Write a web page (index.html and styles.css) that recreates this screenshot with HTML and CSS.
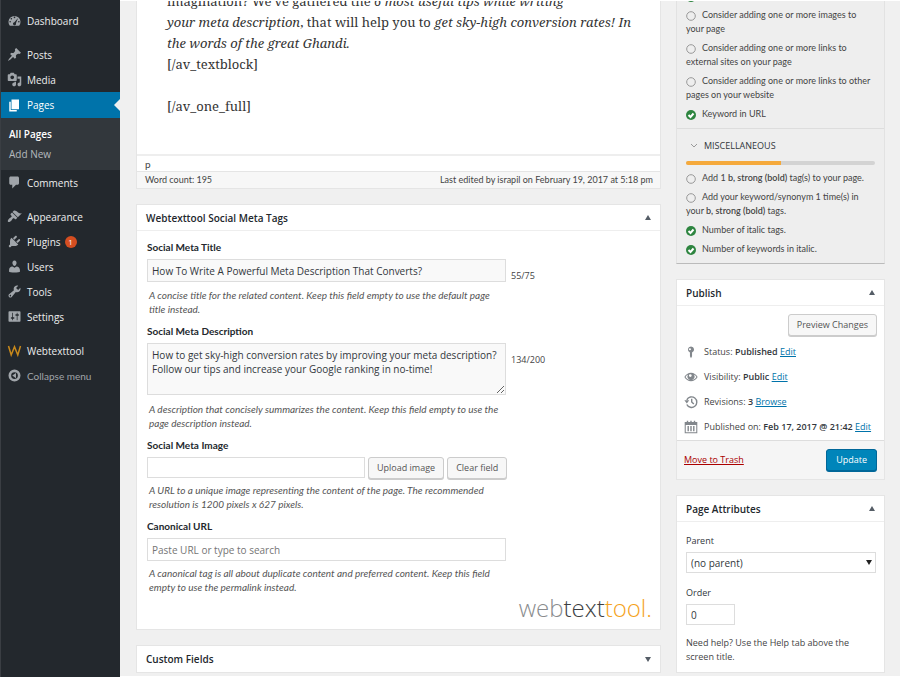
FILE: index.html
```html
<!DOCTYPE html>
<html lang="en">
<head>
<meta charset="utf-8">
<title>Edit Page</title>
<link rel="stylesheet" href="styles.css">
</head>
<body>
<nav class="menu" aria-label="Main menu">
  <a class="item" href="#"><svg class="icon" viewBox="0 0 20 20"><path fill-rule="evenodd" d="M3.8 17h12.4A8 8 0 1 0 3.800 17zM10 4.800a1.100 1.100 0 1 1 0 2.200 1.100 1.100 0 0 1 0-2.200zM5.800 6.500a1.100 1.100 0 1 1 0 2.200 1.100 1.100 0 0 1 0-2.200zM4.200 10.500a1.100 1.100 0 1 1 0 2.200 1.100 1.100 0 0 1 0-2.200zM15.800 10.500a1.100 1.100 0 1 1 0 2.200 1.100 1.100 0 0 1 0-2.200zM14.800 6.600l-2.900 7a2 2 0 1 1-2.100-1.300z"/></svg>Dashboard</a>
  <hr class="separator">
  <a class="item" href="#"><svg class="icon" viewBox="0 0 20 20"><path d="M10.440 3.020l1.820-1.820 6.360 6.350-1.830 1.820c-1.050-.68-2.480-.57-3.410.36l-.75.75c-.92.93-1.040 2.350-.35 3.410l-1.830 1.820-2.410-2.410-2.800 2.790c-.42.42-3.380 2.710-3.800 2.290s1.860-3.390 2.280-3.810l2.790-2.790L4.100 9.360l1.830-1.820c1.050.69 2.480.57 3.400-.36l.75-.75c.93-.92 1.050-2.350.36-3.410z"/></svg>Posts</a>
  <a class="item" href="#"><svg class="icon" viewBox="0 0 20 20"><path fill-rule="evenodd" d="M13 11V4c0-.55-.45-1-1-1h-1.670L9 1H5L3.670 3H2c-.55 0-1 .45-1 1v7c0 .55.45 1 1 1h10c.55 0 1-.45 1-1zM7 4.500c1.380 0 2.500 1.120 2.500 2.500S8.380 9.500 7 9.500 4.500 8.380 4.500 7 5.620 4.500 7 4.500zM14 6h5v10.500c0 1.380-1.120 2.500-2.500 2.500S14 17.880 14 16.500s1.120-2.500 2.500-2.500c.17 0 .34.02.5.05V9h-3V6zm-4 8.050V13h2v3.500c0 1.380-1.120 2.500-2.500 2.500S7 17.880 7 16.500 8.120 14 9.500 14c.17 0 .34.02.5.05z"/></svg>Media</a>
  <a class="item current" href="#"><svg class="icon" viewBox="0 0 20 20"><path d="M6 15V2h10v13H6zm-1 1h8v2H3V5h2v11z"/></svg>Pages</a>
  <div class="submenu">
    <a class="sub active" href="#">All Pages</a>
    <a class="sub" href="#">Add New</a>
  </div>
  <a class="item" href="#"><svg class="icon" viewBox="0 0 20 20"><path d="M5 2h9c1.100 0 2 .9 2 2v7c0 1.100-.9 2-2 2h-2l-5 5v-5H5c-1.100 0-2-.9-2-2V4c0-1.100.9-2 2-2z"/></svg>Comments</a>
  <hr class="separator">
  <a class="item" href="#"><svg class="icon" viewBox="0 0 20 20"><path d="M14.480 11.060L7.410 3.990l1.500-1.500c.5-.56 2.300-.47 3.510.32 1.210.8 1.430 1.280 2.910 2.100 1.180.64 2.450 1.260 4.450.85zm-.71.71L6.700 4.700 4.930 6.470c-.39.39-.39 1.020 0 1.410l1.060 1.060c.39.39.39 1.030 0 1.420-.6.6-1.430 1.110-2.210 1.690-.35.26-.7.53-1.010.84C1.430 14.230.4 16.080 1.400 17.070c.99 1 2.840-.03 4.180-1.360.31-.31.58-.66.85-1.020.57-.78 1.080-1.610 1.690-2.210.39-.39 1.020-.39 1.410 0l1.060 1.060c.39.39 1.020.39 1.410 0z"/></svg>Appearance</a>
  <a class="item" href="#"><svg class="icon" viewBox="0 0 20 20"><path d="M13.110 4.360L9.870 7.600 8 5.730l3.240-3.240c.35-.34 1.050-.2 1.560.32.52.51.66 1.210.31 1.550zm-8 1.770l.91-1.120 9.010 9.010-1.190.84c-.71.71-2.630 1.160-3.820 1.160H6.140L4.900 17.260c-.59.59-1.540.59-2.120 0-.59-.58-.59-1.530 0-2.120l1.240-1.240v-3.880c0-1.130.4-3.190 1.090-3.890zm7.260 3.970l3.240-3.240c.34-.35 1.040-.21 1.550.31.52.51.66 1.210.31 1.550l-3.240 3.250z"/></svg>Plugins<span class="badge">1</span></a>
  <a class="item" href="#"><svg class="icon" viewBox="0 0 20 20"><path d="M10 9.250c-2.270 0-2.730-3.440-2.730-3.440C7 4.020 7.820 2 9.970 2c2.160 0 2.980 2.020 2.710 3.810 0 0-.41 3.440-2.680 3.440zm0 2.570L12.720 10c2.390 0 4.520 2.330 4.520 4.530v2.490s-3.650 1.130-7.240 1.130c-3.650 0-7.240-1.130-7.240-1.130v-2.490c0-2.250 1.940-4.480 4.470-4.480z"/></svg>Users</a>
  <a class="item" href="#"><svg class="icon" viewBox="0 0 20 20"><path fill-rule="evenodd" d="M16.680 9.770c-1.340 1.340-3.300 1.670-4.950.99l-5.410 6.520c-.99.99-2.590.99-3.580 0s-.99-2.590 0-3.570l6.520-5.420c-.68-1.650-.35-3.610.99-4.950 1.280-1.280 3.120-1.620 4.720-1.060l-2.890 2.890 2.820 2.820 2.860-2.870c.53 1.580.18 3.390-1.080 4.650zM3.810 16.210c.4.39 1.040.39 1.430 0 .4-.4.4-1.040 0-1.430-.39-.4-1.030-.4-1.430 0-.39.39-.39 1.030 0 1.430z"/></svg>Tools</a>
  <a class="item" href="#"><svg class="icon" viewBox="0 0 20 20"><path fill-rule="evenodd" d="M18 16V4c0-.55-.45-1-1-1H3c-.55 0-1 .45-1 1v12c0 .55.45 1 1 1h14c.55 0 1-.45 1-1zM8 11h1c.55 0 1 .45 1 1s-.45 1-1 1H8v1.500c0 .28-.22.5-.5.5s-.5-.22-.5-.5V13H6c-.55 0-1-.45-1-1s.45-1 1-1h1V5.500c0-.28.22-.5.5-.5s.5.22.5.5V11zm5-2h-1c-.55 0-1-.45-1-1s.45-1 1-1h1V5.500c0-.28.22-.5.5-.5s.5.22.5.5V7h1c.55 0 1 .45 1 1s-.45 1-1 1h-1v5.500c0 .28-.22.5-.5.5s-.5-.22-.5-.5V9z"/></svg>Settings</a>
  <hr class="separator">
  <a class="item" href="#"><svg class="icon brand" viewBox="0 0 20 20"><path d="M2 4l3.600 12L10 5l4.400 11L18 4"/></svg>Webtexttool</a>
  <button class="item collapse" type="button"><svg class="icon" viewBox="0 0 20 20"><path fill-rule="evenodd" d="M10 2a8 8 0 1 1 0 16 8 8 0 0 1 0-16zm0 3.500a4.500 4.500 0 1 0 0 9 4.500 4.500 0 0 0 0-9zM12 6.500v7L7 10z"/></svg>Collapse menu</button>
</nav>

<main class="page">
  <div class="column">
    <section class="editor">
      <div class="copy">
        <p>imagination? We've gathered the <em>6 most useful tips while writing<br>your meta description</em>, that will help you to <em>get sky-high conversion rates! In<br>the words of the great Ghandi.</em><br>[/av_textblock]</p>
        <p>[/av_one_full]</p>
      </div>
      <div class="path">p</div>
      <div class="status"><span>Word count: 195</span><span>Last edited by israpil on February 19, 2017 at 5:18 pm</span></div>
    </section>

    <section class="box">
      <h2 class="head">Webtexttool Social Meta Tags<span class="toggle"></span></h2>
      <form class="meta">
        <label class="name" for="title">Social Meta Title</label>
        <div class="row"><input class="field wide filled" id="title" type="text" value="How To Write A Powerful Meta Description That Converts?"><span class="count">55/75</span></div>
        <p class="hint">A concise title for the related content. Keep this field empty to use the default page<br>title instead.</p>
        <label class="name" for="desc">Social Meta Description</label>
        <div class="row"><textarea class="field wide filled" id="desc">How to get sky-high conversion rates by improving your meta description?
Follow our tips and increase your Google ranking in no-time!</textarea><span class="count">134/200</span></div>
        <p class="hint">A description that concisely summarizes the content. Keep this field empty to use the<br>page description instead.</p>
        <label class="name" for="image">Social Meta Image</label>
        <div class="row picker"><input class="field url" id="image" type="text"><button class="button" type="button">Upload image</button><button class="button" type="button">Clear field</button></div>
        <p class="hint">A URL to a unique image representing the content of the page. The recommended<br>resolution is 1200 pixels x 627 pixels.</p>
        <label class="name" for="canonical">Canonical URL</label>
        <div class="row"><input class="field wide" id="canonical" type="text" placeholder="Paste URL or type to search"></div>
        <p class="hint">A canonical tag is all about duplicate content and preferred content. Keep this field<br>empty to use the permalink instead.</p>
        <div class="logo">web<span class="dark">text</span><span class="gold">tool.</span></div>
      </form>
    </section>

    <section class="box">
      <h2 class="head closed">Custom Fields<span class="toggle down"></span></h2>
    </section>
  </div>

  <aside class="side">
    <section class="checks">
      <ul class="list first">
        <li class="done"><svg class="mark" viewBox="0 0 10 10"><circle cx="5" cy="5" r="5"/><path d="M2.500 5l2 2 3-3.500"/></svg>Synonyms used on page</li>
        <li><svg class="mark" viewBox="0 0 10 10"><circle cx="5" cy="5" r="4.300"/></svg>Consider adding one or more images to<br>your page</li>
        <li><svg class="mark" viewBox="0 0 10 10"><circle cx="5" cy="5" r="4.300"/></svg>Consider adding one or more links to<br>external sites on your page</li>
        <li><svg class="mark" viewBox="0 0 10 10"><circle cx="5" cy="5" r="4.300"/></svg>Consider adding one or more links to other<br>pages on your website</li>
        <li class="done"><svg class="mark" viewBox="0 0 10 10"><circle cx="5" cy="5" r="5"/><path d="M2.500 5l2 2 3-3.500"/></svg>Keyword in URL</li>
      </ul>
      <h3 class="group"><svg class="chevron" viewBox="0 0 8 8"><path d="M1 2l3 3 3-3"/></svg>MISCELLANEOUS</h3>
      <div class="bar"><div class="fill"></div></div>
      <ul class="list">
        <li><svg class="mark" viewBox="0 0 10 10"><circle cx="5" cy="5" r="4.300"/></svg>Add 1 <b>b, strong (bold)</b> tag(s) to your page.</li>
        <li><svg class="mark" viewBox="0 0 10 10"><circle cx="5" cy="5" r="4.300"/></svg>Add your keyword/synonym 1 time(s) in<br>your <b>b, strong (bold)</b> tags.</li>
        <li class="done"><svg class="mark" viewBox="0 0 10 10"><circle cx="5" cy="5" r="5"/><path d="M2.500 5l2 2 3-3.500"/></svg>Number of italic tags.</li>
        <li class="done"><svg class="mark" viewBox="0 0 10 10"><circle cx="5" cy="5" r="5"/><path d="M2.500 5l2 2 3-3.500"/></svg>Number of keywords in italic.</li>
      </ul>
    </section>

    <section class="box">
      <h2 class="head">Publish<span class="toggle"></span></h2>
      <div class="preview"><button class="button" type="button">Preview Changes</button></div>
      <div class="fact"><svg class="glyph" viewBox="0 0 20 20"><path fill-rule="evenodd" d="M10 2a4.500 4.500 0 0 1 1.500 8.700V16L10 19l-1.500-3v-5.300A4.500 4.500 0 0 1 10 2zM8.500 4.500a1.500 1.500 0 1 0 0 3 1.500 1.500 0 0 0 0-3z"/></svg><span>Status: <b>Published</b> <a href="#">Edit</a></span></div>
      <div class="fact"><svg class="glyph" viewBox="0 0 20 20"><path fill-rule="evenodd" d="M10 4c4 0 7.500 2.500 9.500 6-2 3.500-5.500 6-9.500 6S2.500 13.500.5 10C2.500 6.500 6 4 10 4zM6 6.500C4.300 7.300 3 8.500 2.200 10c1.600 2.700 4.500 4.500 7.800 4.500s6.200-1.800 7.800-4.500c-.8-1.500-2.100-2.700-3.800-3.500A5 5 0 1 1 6 6.500zM9 6a2 2 0 1 0 0 4 2 2 0 0 0 0-4z"/></svg><span>Visibility: <b>Public</b> <a href="#">Edit</a></span></div>
      <div class="fact"><svg class="glyph line" viewBox="0 0 20 20"><path d="M4 7a7.500 7.500 0 1 1 0 6.500M11 5.500V10l3 3"/><path class="solid" d="M.5 7.500h7L4 12z"/></svg><span>Revisions: <b>3</b> <a href="#">Browse</a></span></div>
      <div class="fact"><svg class="glyph" viewBox="0 0 20 20"><path fill-rule="evenodd" d="M4 1h2v2h3V1h2v2h3V1h2v2h3v16H1V3h3zM2.500 7v10.500h15V7zM5 8.500h2V16H5zM9 8.500h2V16H9zM13 8.500h2V16h-2z"/></svg><span>Published on: <b>Feb 17, 2017 @ 21:42</b> <a href="#">Edit</a></span></div>
      <div class="actions"><a class="trash" href="#">Move to Trash</a><button class="button primary" type="button">Update</button></div>
    </section>

    <section class="box">
      <h2 class="head">Page Attributes<span class="toggle"></span></h2>
      <form class="attributes">
        <label class="caption" for="parent">Parent</label>
        <div class="choice"><select class="field" id="parent"><option>(no parent)</option></select></div>
        <label class="caption" for="order">Order</label>
        <input class="field order" id="order" type="text" value="0">
        <p class="help">Need help? Use the Help tab above the<br>screen title.</p>
      </form>
    </section>
  </aside>
</main>
</body>
</html>
```
FILE: styles.css
```css
* { box-sizing: border-box; }
body {
  margin: 0;
  display: flex;
  min-height: 100vh;
  background: #f0f0f0;
  color: #444;
  font: 10px/14px Lato, "Open Sans", sans-serif;
}
h2, h3, p, ul { margin: 0; padding: 0; }
ul { list-style: none; }
b { font-weight: 600; }
input, textarea, select, button { font: inherit; color: inherit; margin: 0; }
a { color: #0073aa; }

.menu {
  flex: none;
  width: 120px;
  padding-top: 8px;
  background: #23282d;
  border-left: 1px solid #3a3e43;
  font-family: "Open Sans", sans-serif;
}
.item {
  display: flex;
  align-items: center;
  position: relative;
  width: 100%;
  height: 25px;
  padding: 0 6px;
  border: 0;
  background: none;
  color: #eee;
  font-weight: 500;
  text-decoration: none;
}
.icon { width: 15px; height: 15px; margin-right: 5px; fill: #a0a5aa; }
.brand { fill: none; stroke: #c98a1b; stroke-width: 2; }
.separator { height: 9px; margin: 0; border: 0; }
.current { height: 26px; background: #0073aa; color: #fff; }
.current .icon { fill: #fff; }
.current::after {
  content: "";
  position: absolute;
  right: 0;
  top: 7px;
  border: 6px solid transparent;
  border-left: 0;
  border-right-color: #f0f0f0;
}
.submenu { padding: 6px 8px; background: #32373c; }
.sub { display: block; line-height: 20px; color: #b4b9be; text-decoration: none; }
.active { color: #fff; font-weight: 600; }
.badge {
  width: 12px;
  height: 12px;
  margin-left: 4px;
  border-radius: 6px;
  background: #d54e21;
  color: #fff;
  font-size: 8px;
  line-height: 12px;
  text-align: center;
}
.collapse { color: #a0a5aa; font-family: Lato, sans-serif; font-weight: 400; }

.page {
  flex: 1;
  display: grid;
  grid-template-columns: minmax(0, 1fr) 209px;
  gap: 15px;
  align-items: start;
  padding: 0 15px 0 16px;
  border-top: 1px solid #fff;
  border-bottom: 1px solid #fff;
}
.column, .side { display: flex; flex-direction: column; gap: 15px; }
.side { font: 9px/14px "Open Sans", sans-serif; }
.box { background: #fff; border: 1px solid #e5e5e5; }
.head {
  display: flex;
  align-items: center;
  justify-content: space-between;
  height: 26px;
  padding: 0 9px;
  border-bottom: 1px solid #eee;
  color: #23282d;
  font: 600 10px/14px "Open Sans", sans-serif;
}
.closed { border-bottom: 0; }
.toggle { border: 3px solid transparent; border-top: 0; border-bottom: 5px solid #555d66; }
.down { border-top: 5px solid #555d66; border-bottom: 0; }

.editor { overflow: hidden; background: #fff; border: 1px solid #e5e5e5; border-top: 0; }
.copy {
  margin-top: -10px;
  padding: 0 20px 37px 30px;
  color: #333;
  font: 13px/21px "Noto Serif", "Liberation Serif", serif;
}
.copy p + p { margin-top: 21px; }
.path { padding: 1px 8px 0; border-top: 2px solid #eee; }
.status {
  display: flex;
  justify-content: space-between;
  padding: 1px 7px 1px 8px;
  border-top: 1px solid #e5e5e5;
  background: #f7f7f7;
  font-size: 9px;
}

.meta { padding: 9px 8px 7px 10px; }
.name { display: block; color: #23282d; font-weight: 700; }
.row { display: flex; align-items: flex-start; gap: 5px; margin: 5px 0; }
.count { margin-top: 10px; font: 9px/14px "Open Sans", sans-serif; }
.field {
  height: 23px;
  padding: 0 4px;
  border: 1px solid #ddd;
  border-radius: 0;
  background: #fff;
  color: #32373c;
  font-family: "Open Sans", sans-serif;
  font-size: 10px;
}
.wide { width: 359px; }
.filled { background: #f9f9f9; }
textarea.field { display: block; height: 52px; margin-bottom: 2px; padding: 4px; line-height: 14px; resize: vertical; }
.field::placeholder { color: #757575; opacity: 1; }
.hint { padding-left: 2px; margin-bottom: 8px; color: #555; font-style: italic; }
.hint:last-of-type { margin-bottom: 0; }
.picker { gap: 3px; margin-bottom: 4px; }
.url { width: 218px; height: 21px; }
.button {
  height: 22px;
  padding: 0 8px;
  border: 1px solid #ccc;
  border-radius: 3px;
  background: #f7f7f7;
  box-shadow: 0 1px 0 #ccc;
  color: #555;
  font: 9px/14px "Open Sans", sans-serif;
}
.primary { padding: 0 9px; border-color: #006799; background: #0085ba; box-shadow: 0 1px 0 #006799; color: #fff; }
.logo {
  color: #8a8c8e;
  font-family: "Open Sans", sans-serif;
  font-size: 24px;
  font-weight: 300;
  line-height: 28px;
  text-align: right;
}
.dark { color: #3c3e42; }
.gold { color: #f5a31b; }

.checks {
  overflow: hidden;
  padding-bottom: 7px;
  border: 1px solid #e2e2e2;
  border-top: 0;
  border-bottom: 1px solid #bbb;
  background: #eee;
}
.list {
  display: flex;
  flex-direction: column;
  gap: 5px;
  padding: 0 9px;
  font-family: Lato, sans-serif;
  white-space: nowrap;
}
.first { margin-top: -12px; padding-bottom: 7px; }
.mark { width: 10px; height: 10px; margin-right: 6px; vertical-align: -3px; fill: none; stroke: #999; }
.done .mark { fill: #2e8540; stroke: none; }
.done .mark path { fill: none; stroke: #fff; stroke-width: 2; }
.group {
  display: flex;
  align-items: center;
  gap: 6px;
  padding: 10px 13px 8px;
  border-top: 1px solid #ddd;
  color: #32373c;
  font: 500 9px/14px "Open Sans", sans-serif;
}
.chevron { width: 8px; height: 8px; fill: none; stroke: #999; }
.bar { height: 4px; margin: 0 9px 6px; border-radius: 2px; background: #d3d3d3; overflow: hidden; }
.fill { width: 50%; height: 100%; background: #f5a93b; }

.preview { padding: 8px 7px 3px; text-align: right; }
.fact { display: flex; align-items: center; gap: 6px; height: 25px; padding: 0 7px; white-space: nowrap; }
.fact b { color: #32373c; }
.glyph { flex: none; width: 14px; height: 14px; fill: #82878c; }
.line { fill: none; stroke: #82878c; stroke-width: 2; }
.solid { fill: #82878c; stroke: none; }
.actions {
  display: flex;
  align-items: center;
  justify-content: space-between;
  margin-top: 1px;
  padding: 8px 7px;
  border-top: 1px solid #ddd;
  background: #f5f5f5;
}
.trash { color: #a00; }

.attributes { padding: 12px 8px 8px 9px; }
.caption { display: block; color: #32373c; font-weight: 500; }
.choice { position: relative; margin: 4px 0 13px; }
.choice::after {
  content: "";
  position: absolute;
  right: 4px;
  top: 8px;
  border: 3px solid transparent;
  border-top: 5px solid #222;
  border-bottom: 0;
  pointer-events: none;
}
.choice .field { display: block; width: 100%; height: 21px; appearance: none; }
.order { display: block; width: 49px; height: 21px; margin: 4px 0 11px; }
```
